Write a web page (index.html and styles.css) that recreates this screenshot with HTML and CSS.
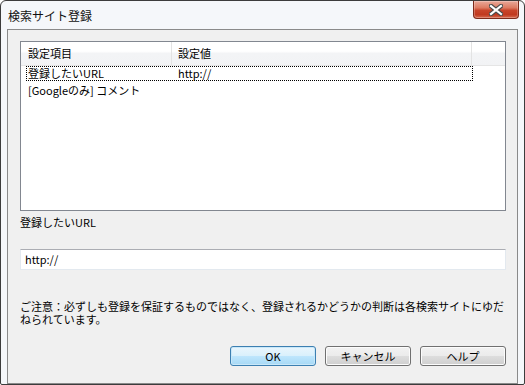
FILE: index.html
```html
<!DOCTYPE html>
<html lang="ja">
<head>
<meta charset="utf-8">
<title>検索サイト登録</title>
<link rel="stylesheet" href="styles.css">
</head>
<body>
<div class="window">
  <div class="titlebar">
    <span class="title">検索サイト登録</span>
    <div class="close">
      <svg width="14" height="12" viewBox="0 0 14 12">
        <path d="M2 2 L12 10 M12 2 L2 10" stroke="#4a4a4a" stroke-width="4.4" stroke-linecap="square" fill="none"/>
        <path d="M2 2 L12 10 M12 2 L2 10" stroke="#ffffff" stroke-width="2.2" stroke-linecap="square" fill="none"/>
      </svg>
    </div>
  </div>
  <div class="client">
    <div class="listview">
      <div class="lv-header">
        <div class="hcol h1">設定項目</div>
        <div class="hcol h2">設定値</div>
        <div class="hcol h3"></div>
      </div>
      <div class="lv-row">
        <div class="focus">
          <span class="cell c1">登録したいURL</span>
          <span class="cell c2">http://</span>
        </div>
      </div>
      <div class="lv-row plain">
        <span class="cell c1">[Googleのみ] コメント</span>
      </div>
    </div>
    <div class="label">登録したいURL</div>
    <div class="textbox">http://</div>
    <p class="note">ご注意：必ずしも登録を保証するものではなく、登録されるかどうかの判断は各検索サイトにゆだねられています。</p>
    <div class="buttons">
      <div class="btn default">OK</div>
      <div class="btn">キャンセル</div>
      <div class="btn">ヘルプ</div>
    </div>
  </div>
</div>
</body>
</html>
```

FILE: styles.css
```css
html, body {
  margin: 0;
  padding: 0;
  background: #ffffff;
}

body {
  font-family: "Noto Sans CJK JP", "Noto Sans", sans-serif;
  color: #000;
}

.window {
  width: 523px;
  height: 383px;
  border: 1px solid #3c3c3c;
  border-radius: 6px 6px 2px 2px;
  background: #f5f7fa;
  display: flex;
  flex-direction: column;
}

.titlebar {
  height: 28px;
  display: flex;
  justify-content: space-between;
  align-items: flex-start;
  padding-left: 7px;
  padding-right: 5px;
}

.title {
  font-size: 12px;
  line-height: 14px;
  margin-top: 8px;
  color: #111;
  letter-spacing: 0;
}

.close {
  width: 44px;
  height: 17px;
  border: 1px solid #7d2a1a;
  border-top: none;
  border-radius: 0 0 4px 4px;
  background: linear-gradient(to bottom, #e9a99a 0%, #dd7b62 40%, #c8442a 55%, #c0391f 80%, #d66a4f 100%);
  display: flex;
  align-items: center;
  justify-content: center;
  box-shadow: inset 0 0 0 1px rgba(255, 255, 255, 0.25);
}

.close svg {
  display: block;
}

.client {
  margin: 0 6px;
  height: 347px;
  border: 1px solid #8a8a8a;
  background: #f0f0f0;
  padding: 11px 11px 0 12px;
  font-size: 11px;
}

.listview {
  width: 484px;
  height: 168px;
  border: 1px solid #828790;
  background: #ffffff;
}

.lv-header {
  display: flex;
  height: 23px;
  border-bottom: 1px solid #e5e5e5;
  background: linear-gradient(to bottom, #ffffff 0%, #ffffff 40%, #f3f4f6 50%, #f2f3f5 100%);
}

.hcol {
  line-height: 23px;
  box-sizing: border-box;
}

.h1 {
  width: 151px;
  padding-left: 7px;
  border-right: 1px solid #e3e3e3;
}

.h2 {
  width: 300px;
  padding-left: 6px;
  border-right: 1px solid #e3e3e3;
}

.h3 {
  flex: 1;
}

.lv-row {
  height: 17px;
  display: flex;
  align-items: flex-start;
}

.focus {
  margin-left: 5px;
  width: 444px;
  height: 13px;
  border: 1px dotted #000;
  display: flex;
  padding-left: 1px;
}

.cell {
  line-height: 13px;
  white-space: nowrap;
}

.focus .c1 {
  width: 150px;
}

.plain {
  padding-left: 7px;
}

.plain .cell {
  line-height: 15px;
}

.label {
  margin-top: 3px;
  line-height: 16px;
  height: 16px;
}

.textbox {
  margin-top: 19px;
  width: 480px;
  height: 19px;
  border: 1px solid #e3e9ef;
  border-top-color: #abadb3;
  background: #ffffff;
  padding-left: 4px;
  line-height: 19px;
}

.note {
  margin: 30px 0 0 0;
  width: 486px;
  line-height: 13px;
  height: 26px;
}

.buttons {
  margin-top: 20px;
  width: 486px;
  display: flex;
  justify-content: flex-end;
  gap: 9px;
}

.btn {
  width: 84px;
  height: 18px;
  border: 1px solid #707070;
  border-radius: 3px;
  background: linear-gradient(to bottom, #f2f2f2 0%, #ebebeb 50%, #dddddd 51%, #cfcfcf 100%);
  box-shadow: inset 0 0 0 1px #fcfcfc;
  text-align: center;
  line-height: 18px;
}

.btn.default {
  border-color: #3c7fb1;
  background: linear-gradient(to bottom, #eaf6fd 0%, #d9f0fc 50%, #bee6fd 51%, #a7d9f5 100%);
  box-shadow: inset 0 0 0 1px #c9e8f9;
}
```
